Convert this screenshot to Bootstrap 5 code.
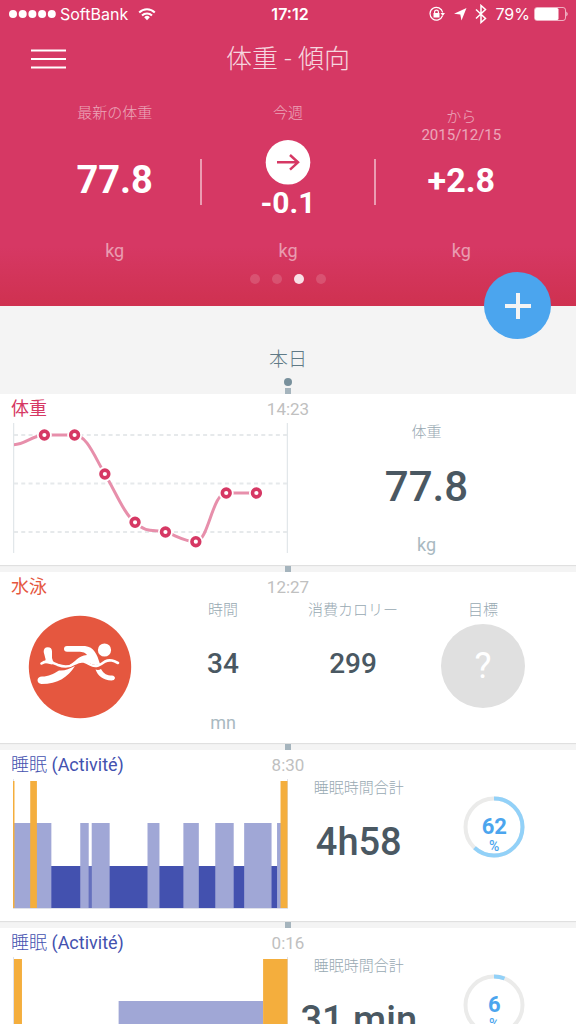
<!DOCTYPE html>
<html lang="ja">
<head>
<meta charset="utf-8">
<meta name="viewport" content="width=device-width, initial-scale=1">
<title>体重 - 傾向</title>
<link href="https://cdn.jsdelivr.net/npm/bootstrap@5.3.0/dist/css/bootstrap.min.css" rel="stylesheet">
<style>
  body { font-family: Roboto, "Noto Sans CJK JP", sans-serif; background: #f4f4f4; color: #4a5862; }
  svg { display: block; flex: none; }

  /* header */
  .hero { background: linear-gradient(#d63864 calc(100% - 60px), #cf3150); color: #fff; }
  .statusbar { display: grid; grid-template-columns: 1fr auto 1fr; height: 28px; padding: 0 8px; font: 16px/28px Inter, sans-serif; }
  .titlebar { display: grid; grid-template-columns: 64px 1fr 64px; height: 60px; padding: 0 14px; }
  .titlebar h1 { font-size: 26px; line-height: 62px; font-weight: 300; opacity: .8; }
  .menu-btn { width: 64px; border-radius: 0; }
  .stats { padding: 16px 28px 0; }
  .stat { display: grid; grid-template-rows: 36px 80px 48px; }
  .stat-name { font-size: 15px; line-height: 18px; opacity: .55; }
  .cjk { font-weight: 300; }
  .stat-unit { font-size: 18px; line-height: 24px; padding-top: 19px; opacity: .5; }
  .stat-num { font-weight: 700; line-height: 34px; }
  .stat-rule::after { content: ""; position: absolute; right: -1px; top: 55px; height: 46px; border-right: 2px solid rgba(255,255,255,.5); }
  .n-xl { font-size: 38px; } .n-l { font-size: 34px; } .n-m { font-size: 30px; }
  .pager { gap: 12px; padding: 6px 0 22px; }
  .pager span { width: 10px; height: 10px; border-radius: 50%; background: rgba(255,255,255,.15); }
  .pager .on { background: rgba(255,255,255,.85); }
  .fab { position: absolute; right: 25px; bottom: -33px; width: 67px; height: 67px; background: #4ba5ee; z-index: 2; }
  .fab:hover { background: #3a97e3; }

  /* timeline */
  .day { height: 88px; padding-top: 40px; }
  .day h2 { font-size: 19px; line-height: 28px; font-weight: 300; color: #607a86; }
  .day-dot { width: 8px; height: 8px; border-radius: 50%; background: #78909c; margin-top: 4px; }
  .tick { width: 6px; height: 6px; background: #a5b4bd; }
  .spacer { height: 7px; }
  .entry { background: #fff; height: 171px; box-shadow: 0 1px 1px rgba(0,0,0,.08); }
  .entry-head { display: grid; grid-template-columns: 1fr auto 1fr; height: 28px; padding: 0 11px; }
  .entry-head h3 { font-size: 18px; line-height: 30px; font-weight: 400; }
  .entry-head time { font-size: 17px; line-height: 30px; color: #c0c0c0; }
  .c-weight { color: #d63864; } .c-swim { color: #e5573f; } .c-sleep { color: #4351af; }
  .chart { width: 50%; padding: 1px 0 0 13px; margin-right: -1px; }
  .figures { display: grid; grid-auto-flow: column; grid-auto-columns: 1fr; text-align: center; }
  .fig-one { padding-right: 10px; } .fig-three { padding-right: 28px; } .fig-two { padding: 0 14px 0 4px; }
  .figure-col { display: grid; grid-template-rows: 20px 88px 30px; }
  .fig-name { font-size: 15px; line-height: 20px; font-weight: 300; color: #98a9b2; }
  .fig-num { font-weight: 500; align-self: center; white-space: nowrap; }
  .fig-unit { font-size: 18px; line-height: 30px; color: #a9b9c1; }
  .f-xl { font-size: 42px; } .f-l { font-size: 38px; } .f-m { font-size: 28px; }
  .sport { width: 160px; margin-right: -2px; padding-top: 15px; }
  .goal { width: 84px; height: 84px; background: #e0e0e0; color: #fff; font-size: 36px; }
  .ring { position: relative; width: 62px; height: 62px; margin-top: 18px; }
  .ring-text { position: absolute; inset: 20px 0 0; color: #4ba5ee; font-weight: 700; font-size: 22px; line-height: 22px; }
  .ring-text small { font-size: 14px; line-height: 16px; display: block; font-weight: 500; }
</style>
</head>
<body>
<div class="vh-100 overflow-hidden">
  <header class="hero position-relative">
    <div class="statusbar">
      <div class="d-flex align-items-center">
        <svg width="48" height="10" fill="#fff"><circle cx="5" cy="5" r="4"/><circle cx="14.700" cy="5" r="4"/><circle cx="24.400" cy="5" r="4"/><circle cx="34.100" cy="5" r="4"/><circle cx="43.800" cy="5" r="4"/></svg>
        <span class="ms-1">SoftBank</span>
        <svg class="ms-2" width="24" height="14" viewBox="-2 0 24 14" fill="none" stroke="#fff" stroke-width="2"><path d="M1.200 5.500a11 11 0 0 1 15.600 0M4 8.500a7 7 0 0 1 10 0"/><path d="M9 13.200l-2.800-3a4 4 0 0 1 5.600 0z" fill="#fff" stroke="none"/></svg>
      </div>
      <div class="fw-semibold ps-1">17:12</div>
      <div class="d-flex align-items-center justify-content-end">
        <svg width="16" height="16" viewBox="0 0 16 16" fill="none" stroke="#fff" stroke-width="1.200"><path d="M13.500 9.800A6.400 6.400 0 1 1 13.700 6.500"/><path d="M11.500 7h4.500l-2.200 3z" fill="#fff" stroke="none"/><rect x="4.500" y="7" width="6" height="4.500" fill="#fff" stroke="none"/><path d="M5.600 7.500V6a1.900 1.900 0 0 1 3.800 0v1.500"/></svg>
        <svg class="ms-2" width="14" height="14" viewBox="0 0 14 14" fill="#fff"><path d="M13.500 1L8.500 13.500 7.300 7.500 1 6.800z"/></svg>
        <svg class="ms-2" width="12" height="20" viewBox="0 0 12 20" fill="none" stroke="#fff" stroke-width="1.500"><path d="M1 5.500l9.500 9L6 18.500v-17l4.500 4L1 14.500"/></svg>
        <span class="ms-2">79%</span>
        <svg class="ms-1" width="34" height="14" viewBox="0 0 34 14"><rect x=".5" y=".5" width="31" height="13" rx="2.500" fill="none" stroke="#fff" stroke-opacity=".6"/><rect x="1" y="1" width="23.500" height="12" rx="1.500" fill="#fff"/><path d="M32.500 4.500q2 2.500 0 5z" fill="#fff"/></svg>
      </div>
    </div>

    <div class="titlebar">
      <button type="button" class="btn menu-btn p-0 d-flex align-items-center ps-3" aria-label="メニュー">
        <svg width="35" height="22" stroke="#fff" stroke-width="2"><path d="M0 2.500h35M0 11h35M0 19.500h35"/></svg>
      </button>
      <h1 class="m-0 text-center">体重 - 傾向</h1>
    </div>

    <div class="stats row g-0 text-center">
      <div class="col-4 stat stat-rule position-relative">
        <div class="stat-name cjk">最新の体重</div>
        <div class="stat-num n-xl align-self-center">77.8</div>
        <div class="stat-unit">kg</div>
      </div>
      <div class="col-4 stat stat-rule position-relative">
        <div class="stat-name cjk">今週</div>
        <div>
          <svg class="mx-auto" width="46" height="46" viewBox="0 0 46 46"><circle cx="23" cy="22.300" r="22.300" fill="#fff"/><path d="M12 22.300h20M25 15l8 7.300-8 7.300" fill="none" stroke="#d63864" stroke-width="2.500"/></svg>
          <div class="stat-num n-m">-0.1</div>
        </div>
        <div class="stat-unit">kg</div>
      </div>
      <div class="col-4 stat">
        <div class="stat-name pt-1"><span class="cjk">から</span><br>2015/12/15</div>
        <div class="stat-num n-l align-self-center">+2.8</div>
        <div class="stat-unit">kg</div>
      </div>
    </div>

    <div class="pager d-flex justify-content-center"><span></span><span></span><span class="on"></span><span></span></div>

    <button type="button" class="btn fab rounded-circle p-0 d-flex align-items-center justify-content-center border-0" aria-label="追加">
      <svg width="26" height="26" stroke="#f4f4f4" stroke-width="4"><path d="M0 13h26M13 0v26"/></svg>
    </button>
  </header>

  <main>
    <div class="day d-flex flex-column align-items-center">
      <h2 class="m-0">本日</h2>
      <div class="day-dot"></div>
      <div class="tick mt-auto"></div>
    </div>

    <article class="entry">
      <div class="entry-head"><h3 class="m-0 c-weight cjk">体重</h3><time>14:23</time></div>
      <div class="d-flex">
        <div class="chart">
          <svg class="w-100" height="130" viewBox="0 0 276 130" preserveAspectRatio="none">
            <path d="M.5 0v130M275.500 0v130" stroke="#e2e7ea" stroke-width="1.500"/>
            <path d="M1 12h274M1 60.500h274M1 109h274" stroke="#e6e9eb" stroke-width="2" stroke-dasharray="4 3.300"/>
            <path d="M1 21.700C12 21.700 20 12 31.500 12H61.800C74 12 82 34 92.200 51C102 67 112 92 122.500 99.300C134 111 142 106 153 109C163 112 172 118.700 183.500 118.700C196 118.700 200 70 214 70H244.300" fill="none" stroke="#e78fab" stroke-width="3"/>
            <g fill="#fff"><circle cx="31.500" cy="12" r="7.500"/><circle cx="61.800" cy="12" r="7.500"/><circle cx="92.200" cy="51" r="7.500"/><circle cx="122.500" cy="99.300" r="7.500"/><circle cx="153" cy="109" r="7.500"/><circle cx="183.500" cy="118.700" r="7.500"/><circle cx="214" cy="70" r="7.500"/><circle cx="244.300" cy="70" r="7.500"/></g>
            <g fill="#fff" stroke="#d63864" stroke-width="3.600"><circle cx="31.500" cy="12" r="3.900"/><circle cx="61.800" cy="12" r="3.900"/><circle cx="92.200" cy="51" r="3.900"/><circle cx="122.500" cy="99.300" r="3.900"/><circle cx="153" cy="109" r="3.900"/><circle cx="183.500" cy="118.700" r="3.900"/><circle cx="214" cy="70" r="3.900"/><circle cx="244.300" cy="70" r="3.900"/></g>
          </svg>
        </div>
        <div class="figures fig-one flex-fill">
          <div class="figure-col"><div class="fig-name">体重</div><div class="fig-num f-xl">77.8</div><div class="fig-unit">kg</div></div>
        </div>
      </div>
    </article>
    <div class="spacer d-flex justify-content-center align-items-end"><div class="tick"></div></div>

    <article class="entry">
      <div class="entry-head"><h3 class="m-0 c-swim cjk">水泳</h3><time>12:27</time></div>
      <div class="d-flex">
        <div class="sport">
          <svg class="mx-auto" width="104" height="104" viewBox="0 0 104 104">
            <circle cx="52" cy="52" r="51.200" fill="#e5573f"/>
            <g fill="#fff">
              <circle cx="76.500" cy="35" r="6.600"/>
              <path d="M47 51C40 62 30 69 13.500 69Q9.500 68.500 9.500 65Q10 61.500 14 61.500C21 61.500 25 59 31 55.500C37 56 41 54 47 51Z"/>
              <path d="M67.500 54.500Q70.500 55.500 73 54C76 59 79 60.500 84 60.500Q87 61 87 63.200Q86.500 65.500 83.500 65.500C75 65 70 61 67.500 54.500Z"/>
              <path d="M39 31H57C66 32 69 39 72 49Q67 51 62 48.500Q54 44 47 48.500L41 50.500C47 47 50 41 59 40C57 37 53 36.800 49 36.800H39Q36 36.500 36 34Q36 31 39 31Z"/>
              <path d="M15 47.500Q18 46 17.500 44L15.700 37Q15.500 32.200 19.800 32.200Q24 32.200 24 36.500V43Q24.500 46 26.500 48L24 49.500Z"/>
            </g>
            <path d="M13.500 48.500C19 44.500 25 48 30 50C37 52.500 42 52 47 48.500C54 44.500 58 47 62 49.500C68 53 73 49.500 77 46.500C82 44 86 46 90 48" fill="none" stroke="#fff" stroke-width="2.600" stroke-linecap="round"/>
          </svg>
        </div>
        <div class="figures fig-three flex-fill">
          <div class="figure-col"><div class="fig-name">時間</div><div class="fig-num f-m">34</div><div class="fig-unit">mn</div></div>
          <div class="figure-col"><div class="fig-name">消費カロリー</div><div class="fig-num f-m">299</div></div>
          <div class="figure-col"><div class="fig-name">目標</div><div class="goal rounded-circle mx-auto align-self-end d-flex align-items-center justify-content-center">?</div></div>
        </div>
      </div>
    </article>
    <div class="spacer d-flex justify-content-center align-items-end"><div class="tick"></div></div>

    <article class="entry">
      <div class="entry-head"><h3 class="m-0 c-sleep"><span class="cjk">睡眠</span> (Activité)</h3><time>8:30</time></div>
      <div class="d-flex">
        <div class="chart">
          <svg class="w-100" height="130" viewBox="0 0 276 130" preserveAspectRatio="none">
            <path d="M.5 0v130M275.500 0v130M0 129.500h276" stroke="#dfe1ea"/>
            <path d="M38 87H269V129H38z" fill="#4351af"/>
            <path d="M76 87H79V129H76z" fill="#6570be"/>
            <path d="M1 44H38.500V129H1zM67.500 44H76V129H67.500zM79 44H97V129H79zM135 44H147V129H135zM171 44H186.500V129H171zM203 44H221.500V129H203zM232 44H259.500V129H232zM265 44H269V129H265z" fill="#a0a7d6"/>
            <path d="M0 2H1.500V129H0zM17.300 2H24V129H17.300zM268.500 2H275.500V129H268.500z" fill="#f4ae3d"/>
          </svg>
        </div>
        <div class="figures fig-two flex-fill">
          <div class="figure-col"><div class="fig-name">睡眠時間合計</div><div class="fig-num f-l">4h58</div></div>
          <div>
            <div class="ring mx-auto">
              <svg width="62" height="62" fill="none" stroke-width="4"><circle cx="31" cy="31" r="28.500" stroke="#ebebea"/><circle cx="31" cy="31" r="28.500" stroke="#92d1f8" pathLength="100" stroke-dasharray="62 100" transform="rotate(-90 31 31)"/></svg>
              <div class="ring-text">62<small>%</small></div>
            </div>
          </div>
        </div>
      </div>
    </article>
    <div class="spacer d-flex justify-content-center align-items-end"><div class="tick"></div></div>

    <article class="entry">
      <div class="entry-head"><h3 class="m-0 c-sleep"><span class="cjk">睡眠</span> (Activité)</h3><time>0:16</time></div>
      <div class="d-flex">
        <div class="chart">
          <svg class="w-100" height="130" viewBox="0 0 276 130" preserveAspectRatio="none">
            <path d="M.5 0v130M275.500 0v130M0 129.500h276" stroke="#dfe1ea"/>
            <path d="M106 44H251V129H106z" fill="#a0a7d6"/>
            <path d="M1 2H9V129H1zM251 2H275.500V129H251z" fill="#f4ae3d"/>
          </svg>
        </div>
        <div class="figures fig-two flex-fill">
          <div class="figure-col"><div class="fig-name">睡眠時間合計</div><div class="fig-num f-l">31 min</div></div>
          <div>
            <div class="ring mx-auto">
              <svg width="62" height="62" fill="none" stroke-width="4"><circle cx="31" cy="31" r="28.500" stroke="#ebebea"/><circle cx="31" cy="31" r="28.500" stroke="#92d1f8" pathLength="100" stroke-dasharray="6 100" transform="rotate(-90 31 31)"/></svg>
              <div class="ring-text">6<small>%</small></div>
            </div>
          </div>
        </div>
      </div>
    </article>
  </main>
</div>
<script src="https://cdn.jsdelivr.net/npm/bootstrap@5.3.0/dist/js/bootstrap.bundle.min.js"></script>
</body>
</html>
